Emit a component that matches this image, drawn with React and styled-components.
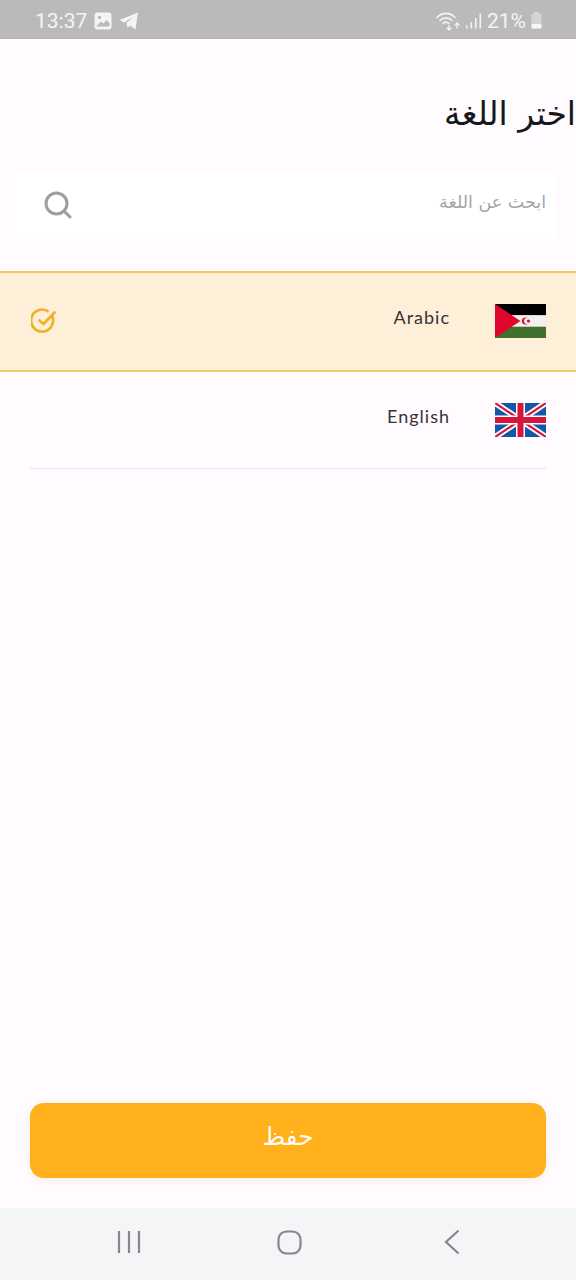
import React from 'react'
import styled, { createGlobalStyle } from 'styled-components'

const GlobalStyle = createGlobalStyle`
    html, body {
        margin: 0;
        padding: 0;
        background: #fffbfe;
    }
    * {
        box-sizing: border-box;
    }
`

const Page = styled.div`
    width: 576px;
    height: 1280px;
    display: flex;
    flex-direction: column;
    background: #fffbfe;
    font-family: "Lato", "DejaVu Sans", sans-serif;
    overflow: hidden;
`

const StatusBar = styled.div`
    height: 39px;
    flex-shrink: 0;
    display: flex;
    align-items: center;
    justify-content: space-between;
    padding: 3px 34px 0 35px;
    background: #bbbabb;
    border-bottom: 1px solid #b0b0b0;
    color: #f4f4f4;
`

const StatusGroup = styled.div`
    display: flex;
    align-items: center;
    gap: ${(props) => props.$gap || 8}px;
`

const StatusText = styled.span`
    font-family: "Roboto", sans-serif;
    font-size: 21px;
    line-height: 26px;
    font-weight: 400;
`

const Title = styled.h1`
    margin: 57px 0 0;
    height: 36px;
    font-family: "DejaVu Sans", sans-serif;
    font-size: 33px;
    line-height: 36px;
    font-weight: 400;
    color: #17181c;
    text-align: right;
    direction: rtl;
`

const SearchBox = styled.div`
    width: 540px;
    height: 66px;
    margin: 40px 0 33px 16px;
    display: flex;
    align-items: center;
    justify-content: space-between;
    padding: 0 10px 0 28px;
    background: #ffffff;
`

const SearchHint = styled.span`
    margin-bottom: 6px;
    font-family: "DejaVu Sans", sans-serif;
    font-size: 17.5px;
    font-weight: 400;
    color: #a3a5a8;
    direction: rtl;
`

const LanguageRow = styled.div`
    height: ${(props) => (props.$selected ? 101 : 96)}px;
    display: flex;
    align-items: center;
    justify-content: space-between;
    padding: ${(props) => (props.$selected ? '0 30px 1px 31px' : '0 30px')};
    background: ${(props) => (props.$selected ? '#feefd9' : 'transparent')};
    border-top: ${(props) => (props.$selected ? '2px solid #f1c768' : '0')};
    border-bottom: ${(props) => (props.$selected ? '2px solid #f1c768' : '0')};
`

const Divider = styled.div`
    height: 1px;
    margin: 0 30px;
    background: #e7e3e8;
`

const LanguageInfo = styled.div`
    margin-left: auto;
    display: flex;
    align-items: center;
    gap: 45px;
`

const LanguageName = styled.span`
    margin-bottom: 9px;
    font-size: 18px;
    letter-spacing: 1px;
    color: #333338;
`

const Footer = styled.div`
    margin-top: auto;
    padding: 0 30px 30px;
`

const SaveButton = styled.button`
    width: 516px;
    height: 75px;
    display: block;
    padding: 0 0 8px;
    border: 0;
    border-radius: 14px;
    background: #ffb01b;
    box-shadow: 0 2px 8px rgba(120, 80, 0, 0.08);
    color: #fffdf8;
    font-family: "DejaVu Sans", sans-serif;
    font-size: 24.5px;
    direction: rtl;
`

const NavBar = styled.div`
    height: 72px;
    flex-shrink: 0;
    display: flex;
    align-items: center;
    justify-content: space-between;
    padding: 0 117px 4px 117px;
    background: #f4f5f7;
`

const HomeSvg = styled.svg`
    margin-right: 5px;
`

const ImageIcon = () => (
    <svg width="18" height="18" viewBox="0 0 18 18">
        <rect x="0.5" y="0.5" width="17" height="17" rx="3" fill="#f4f4f4" />
        <circle cx="5.5" cy="5.5" r="1.7" fill="#bbbabb" />
        <path d="M2.5 14 L7 9.5 L9.5 11.5 L12.5 8 L15.5 11 V14.5 H2.5 Z" fill="#bbbabb" />
    </svg>
)

const TelegramIcon = () => (
    <svg width="20" height="18" viewBox="0 0 20 18">
        <path d="M0.5 8 L19 0.5 L16.5 17.5 L11 13.5 L8.5 16 L7.5 11 L14.5 4.5 L5.5 10.5 Z" fill="#f4f4f4" />
    </svg>
)

const WifiIcon = () => (
    <svg width="25" height="20" viewBox="0 0 25 20" fill="none" stroke="#f4f4f4" strokeWidth="1.6" strokeLinecap="round">
        <path d="M1 6.5 C6 1 14 1 19 6.5" />
        <path d="M4 9.5 C7.5 6 12.5 6 16 9.5" />
        <path d="M7 12.5 C9 10.7 11 10.7 13 12.5" />
        <path d="M13 14.5 V19 M11 17 L13 19 L15 17" strokeWidth="1.3" />
        <path d="M21 17 V12 M19 14 L21 12 L23 14" strokeWidth="1.3" />
    </svg>
)

const SignalIcon = () => (
    <svg width="16" height="16" viewBox="0 0 16 16" fill="#f4f4f4">
        <rect x="0" y="12.5" width="1.6" height="3" />
        <rect x="4.5" y="9" width="1.6" height="6.5" />
        <rect x="9" y="5" width="1.6" height="10.5" />
        <rect x="13.5" y="0.5" width="1.6" height="15" />
    </svg>
)

const BatteryIcon = () => (
    <svg width="11" height="17" viewBox="0 0 11 17">
        <rect x="3.5" y="0" width="4" height="2" fill="#d8d8d8" />
        <rect x="0.5" y="1.5" width="10" height="15" rx="1.5" fill="#d4d4d4" />
        <rect x="0.5" y="12" width="10" height="4.5" rx="1" fill="#f6f6f6" />
    </svg>
)

const SearchIcon = () => (
    <svg width="28" height="28" viewBox="0 0 28 28" fill="none" stroke="#9a9fa3" strokeWidth="3" strokeLinecap="round">
        <circle cx="12.5" cy="12.5" r="10.5" />
        <path d="M20.5 20.5 L26 26" />
    </svg>
)

const CheckIcon = () => (
    <svg width="26" height="26" viewBox="0 0 26 26" fill="none" stroke="#efb125" strokeWidth="2.7" strokeLinecap="round" strokeLinejoin="round">
        <path d="M21.5 9 A11 11 0 1 1 16.5 3" />
        <path d="M8.5 12.5 L12.5 16 L23.5 4.5" />
    </svg>
)

const SaharaFlag = () => (
    <svg width="51" height="34" viewBox="0 0 51 34">
        <rect width="51" height="11.3" fill="#000000" />
        <rect y="11.3" width="51" height="11.4" fill="#f4f0f0" />
        <rect y="22.7" width="51" height="11.3" fill="#42702f" />
        <path d="M0 0 L25.5 17 L0 34 Z" fill="#e2062c" />
        <circle cx="30.5" cy="17" r="3.6" fill="#e2062c" />
        <circle cx="32" cy="17" r="3" fill="#f4f0f0" />
        <circle cx="33.5" cy="17" r="1.6" fill="#e2062c" />
    </svg>
)

const UnionFlag = () => (
    <svg width="51" height="34" viewBox="0 0 51 34">
        <rect width="51" height="34" fill="#1257a8" />
        <path d="M0 0 L51 34 M51 0 L0 34" stroke="#ffffff" strokeWidth="6" />
        <path d="M0 0 L51 34 M51 0 L0 34" stroke="#d8143a" strokeWidth="2.2" />
        <path d="M25.5 0 V34 M0 17 H51" stroke="#ffffff" strokeWidth="9" />
        <path d="M25.5 0 V34 M0 17 H51" stroke="#d8143a" strokeWidth="6" />
    </svg>
)

const NavRecents = () => (
    <svg width="24" height="24" viewBox="0 0 24 24" fill="none" stroke="#85878b" strokeWidth="2.2">
        <path d="M2 1 V23 M12 1 V23 M22 1 V23" />
    </svg>
)

const NavHome = () => (
    <HomeSvg width="25" height="25" viewBox="0 0 25 25" fill="none" stroke="#85878b" strokeWidth="2.2">
        <rect x="1.5" y="1.5" width="22" height="22" rx="8" />
    </HomeSvg>
)

const NavBack = () => (
    <svg width="16" height="26" viewBox="0 0 16 26" fill="none" stroke="#85878b" strokeWidth="2.2">
        <path d="M15.5 1.5 L3 13 L15.5 24.5" />
    </svg>
)

export default function App() {
    return (
        <Page>
            <GlobalStyle />
            <StatusBar>
                <StatusGroup $gap={7}>
                    <StatusText>13:37</StatusText>
                    <ImageIcon />
                    <TelegramIcon />
                </StatusGroup>
                <StatusGroup $gap={5}>
                    <WifiIcon />
                    <SignalIcon />
                    <StatusText>21%</StatusText>
                    <BatteryIcon />
                </StatusGroup>
            </StatusBar>

            <Title>اختر اللغة</Title>

            <SearchBox>
                <SearchIcon />
                <SearchHint>ابحث عن اللغة</SearchHint>
            </SearchBox>

            <LanguageRow $selected>
                <CheckIcon />
                <LanguageInfo>
                    <LanguageName>Arabic</LanguageName>
                    <SaharaFlag />
                </LanguageInfo>
            </LanguageRow>
            <LanguageRow>
                <LanguageInfo>
                    <LanguageName>English</LanguageName>
                    <UnionFlag />
                </LanguageInfo>
            </LanguageRow>
            <Divider />

            <Footer>
                <SaveButton>حفظ</SaveButton>
            </Footer>

            <NavBar>
                <NavRecents />
                <NavHome />
                <NavBack />
            </NavBar>
        </Page>
    )
}
